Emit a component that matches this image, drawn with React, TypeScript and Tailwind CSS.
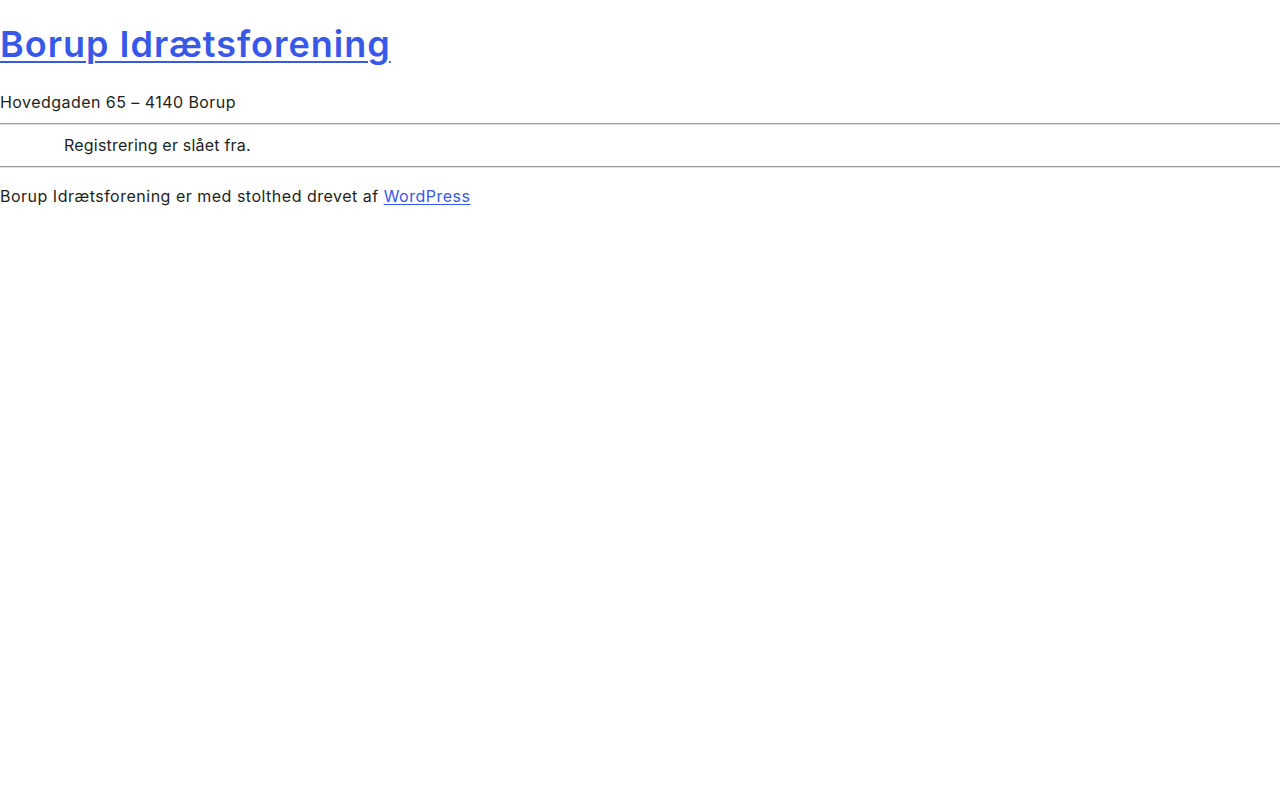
import React from 'react';

export default function App() {
  return (
    <div className="min-h-[800px] bg-white text-[#1e1e1e] font-['Inter',sans-serif] text-[16px]">
      <header className="pt-[20px]">
        <h1 className="text-[36px] leading-[48px] font-semibold tracking-[1px]">
          <a href="#" className="text-[#3858e9] underline decoration-[2px] underline-offset-[4px]">
            Borup Idrætsforening
          </a>
        </h1>
        <p className="mt-[22px] leading-[24px] tracking-[0.45px]">Hovedgaden 65 – 4140 Borup</p>
      </header>
      <hr className="mt-[9px] border-0 border-t border-t-[#9a9a9a] border-b border-b-[#e2e2e2]" />
      <main className="mt-[8px]">
        <p className="pl-[64px] leading-[24px] tracking-[0.2px]">Registrering er slået fra.</p>
      </main>
      <hr className="mt-[9px] border-0 border-t border-t-[#9a9a9a] border-b border-b-[#e2e2e2]" />
      <footer className="mt-[16px]">
        <p className="leading-[24px] tracking-[0.5px]">
          Borup Idrætsforening er med stolthed drevet af{' '}
          <a href="#" className="text-[#3858e9] underline underline-offset-[2px]">WordPress</a>
        </p>
      </footer>
    </div>
  );
}
